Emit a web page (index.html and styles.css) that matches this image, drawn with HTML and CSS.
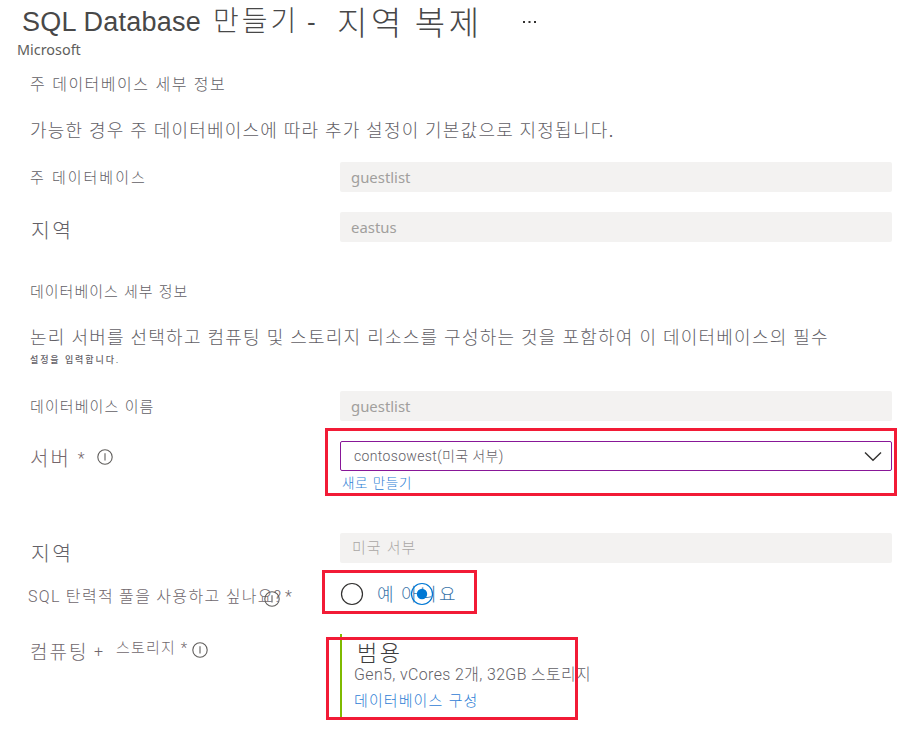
FILE: index.html
```
<!DOCTYPE html>
<html lang="ko">
<head>
<meta charset="utf-8">
<title>SQL Database</title>
<link rel="stylesheet" href="styles.css">
</head>
<body>
<svg width="0" height="0" class="defs"><defs>
  <symbol id="info" viewBox="0 0 16 16"><circle cx="8" cy="8" r="7.2" fill="none" stroke="#605e5c" stroke-width="1.1"/><path d="M8 4.300v7.200" stroke="#605e5c" stroke-width="1.1"/></symbol>
</defs></svg>
<main class="page">
  <header class="title">
    <h1 class="title-main"><span class="title-latin">SQL Database</span> 만들기</h1>
    <span class="title-dash">-</span>
    <span class="title-sub">지역 복제</span>
    <svg class="more" width="16" height="4" viewBox="0 0 16 4"><path d="M1 1h2v2H1zM6.500 1h2v2h-2zM12 1h2v2h-2z" fill="#323130"/></svg>
  </header>
  <p class="vendor">Microsoft</p>

  <h2 class="heading heading-primary">주 데이터베이스 세부 정보</h2>
  <p class="desc desc-primary">가능한 경우 주 데이터베이스에 따라 추가 설정이 기본값으로 지정됩니다.</p>
  <div class="row row-first">
    <label class="label label-primary">주 데이터베이스</label>
    <div class="field">guestlist</div>
  </div>
  <div class="row">
    <label class="label label-large">지역</label>
    <div class="field">eastus</div>
  </div>

  <h2 class="heading heading-details">데이터베이스 세부 정보</h2>
  <p class="desc desc-details">논리 서버를 선택하고 컴퓨팅 및 스토리지 리소스를 구성하는 것을 포함하여 이 데이터베이스의 필수</p>
  <p class="desc-small">설정을 입력합니다.</p>
  <div class="row row-name">
    <label class="label label-name">데이터베이스 이름</label>
    <div class="field">guestlist</div>
  </div>
  <div class="row row-server">
    <label class="label label-server">서버 <span class="star">*</span><svg class="info"><use href="#info"/></svg></label>
    <div class="control">
      <div class="select"><span>contosowest(미국 서부)</span>
        <svg width="18" height="11" viewBox="0 0 18 11"><path d="M1 1.500l8 7.800 8-7.800" fill="none" stroke="#323130" stroke-width="1.400"/></svg>
      </div>
      <a class="link link-new">새로 만들기</a>
      <i class="mark mark-server"></i>
    </div>
  </div>
  <div class="row row-region">
    <label class="label label-large">지역</label>
    <div class="field field-korean">미국 서부</div>
  </div>
  <div class="row row-pool">
    <label class="label label-pool">SQL 탄력적 풀을 사용하고 싶나요?<span class="pool-star">*</span><svg class="info info-over"><use href="#info"/></svg></label>
    <div class="control radios">
      <svg class="radio" viewBox="0 0 24 24"><circle cx="12" cy="12" r="10.500" fill="none" stroke="#323130" stroke-width="1.200"/></svg>
      <span class="yes">예</span><span class="no">아니요<svg class="radio radio-over" viewBox="0 0 24 24"><circle cx="12" cy="12" r="10.500" fill="none" stroke="#0078d4" stroke-width="1.200"/><circle cx="12" cy="12" r="5.200" fill="#0078d4"/></svg></span>
      <i class="mark mark-pool"></i>
    </div>
  </div>
  <div class="row row-compute">
    <label class="label label-compute"><span class="compute">컴퓨팅</span><span class="plus">+</span><span class="storage">스토리지 *</span><svg class="info info-storage"><use href="#info"/></svg></label>
    <div class="control tier">
      <strong class="tier-name">범용</strong>
      <span class="tier-spec">Gen5, vCores 2개, 32GB 스토리지</span>
      <a class="link link-config">데이터베이스 구성</a>
      <i class="mark mark-tier"></i>
    </div>
  </div>
</main>
</body>
</html>
```
FILE: styles.css
```
* { box-sizing: border-box; }
body { margin: 0; background: #fff; color: #626066; font-family: "Liberation Sans", "Noto Sans CJK KR", sans-serif; font-weight: 300; }
h1, h2, p { margin: 0; font-weight: 300; white-space: nowrap; }
svg { display: block; flex: none; }
.defs { position: absolute; }
.page { width: 906px; height: 731px; overflow: hidden; }

.title { display: flex; height: 42px; padding-left: 22px; color: #484848; line-height: 43px; white-space: nowrap; }
.title-main { width: 285px; font-size: 28px; letter-spacing: 3px; word-spacing: 1px; }
.title-latin { font-size: 27px; letter-spacing: .25px; word-spacing: 0; }
.title-dash { width: 30px; font-size: 26px; line-height: 45px; }
.title-sub { width: 185px; font-size: 33px; letter-spacing: 3.6px; word-spacing: -3px; line-height: 48px; }
.more { margin-top: 20px; }
.vendor { height: 18px; padding-left: 17px; color: #605e5c; font: 14.4px/16px "Noto Sans", sans-serif; }

.heading, .desc { padding-left: 30px; }
.heading-primary { margin-top: 17px; font-size: 16px; line-height: 16px; letter-spacing: 1.5px; }
.desc-primary { margin-top: 28px; font-size: 18px; line-height: 20px; letter-spacing: 1.2px; word-spacing: -.5px; }
.heading-details { margin-top: 41px; font-size: 15px; line-height: 18px; letter-spacing: 1px; }
.desc-details { margin-top: 28px; font-size: 18px; line-height: 18px; letter-spacing: 1.22px; word-spacing: -.4px; }
.desc-small { margin-top: 7px; padding-left: 30px; font-size: 9px; line-height: 12px; letter-spacing: 1.9px; font-weight: 500; }

.row { display: grid; grid-template-columns: 310px 552px; margin: 20px 0 0 30px; line-height: 32px; white-space: nowrap; }
.row-first { margin-top: 21px; }
.row-name { margin-top: 25px; }
.row-region { margin-top: 38px; }
.row-pool { margin-top: 16px; }
.row-compute { margin-top: 25px; }
.label { position: relative; height: 30px; }
.label-primary { font-size: 15px; letter-spacing: 2px; }
.label-large { padding-left: 1px; font-size: 20.500px; letter-spacing: 2.500px; line-height: 37px; }
.row-region .label-large { line-height: 41px; }
.label-name { font-size: 15px; letter-spacing: 1.1px; }
.label-server { display: flex; color: #75666b; font-size: 20px; letter-spacing: 2px; line-height: 36px; }
.star { width: 20px; padding-left: 7px; font: 300 16px/36px Roboto, sans-serif; }
.info { width: 16px; height: 16px; }
.label-server .info { margin: 8px 0 0 6px; }
.label-pool { left: -2px; color: #70676d; font: 300 16px/36px Roboto, "Noto Sans CJK KR", sans-serif; letter-spacing: 1.3px; }
.pool-star { position: absolute; left: 257px; top: 0; }
.info-over { position: absolute; left: 236px; top: 12px; }
.label-compute { display: flex; color: #70676d; }
.compute { width: 64px; font-size: 19px; letter-spacing: 2px; line-height: 37px; }
.plus { width: 22px; font: 300 16px/36px Roboto, sans-serif; }
.storage { width: 76px; font: 300 15px/29px Roboto, "Noto Sans CJK KR", sans-serif; letter-spacing: 1.2px; }
.info-storage { margin-top: 8px; }

.field { height: 30px; padding-left: 11px; border-radius: 2px; background: #f3f2f1; color: #a19f9d; font: 14.900px/31px "Noto Sans", sans-serif; }
.field-korean { padding-left: 12px; color: #aaa7a5; font: 300 15px/29px "Liberation Sans", "Noto Sans CJK KR", sans-serif; letter-spacing: 1px; }
.control { position: relative; }
.row-server .control { height: 54px; }
.select { display: flex; align-items: center; justify-content: space-between; height: 30px; padding: 0 9px 0 13px; border: 1px solid #881798; border-radius: 2px; font: 300 14px/30px Roboto, "Noto Sans CJK KR", sans-serif; letter-spacing: .35px; }
.link { display: block; color: #2f80d5; }
.link-new { padding-left: 2px; font-size: 13.500px; line-height: 25px; letter-spacing: .7px; }
.link-config { font-size: 15px; line-height: 30px; letter-spacing: 1.1px; }
.mark { position: absolute; border: 3px solid #f21b36; }
.mark-server { left: -15px; top: -13px; width: 572px; height: 68px; }
.mark-pool { left: -18px; top: -9px; width: 155px; height: 44px; }
.mark-tier { left: -14px; top: 3px; width: 252px; height: 83px; }
.radios { display: flex; height: 30px; color: #3c76aa; font-size: 18px; }
.radio { width: 24px; height: 24px; margin-top: 3px; }
.yes { width: 24px; margin-left: 13px; }
.no { position: relative; letter-spacing: 2.500px; }
.radio-over { position: absolute; left: 9px; top: 0; }
.tier { display: flex; flex-direction: column; height: 83px; padding-left: 14px; }
.tier::before { content: ""; position: absolute; left: 0; top: 0; width: 2px; height: 83px; background: #7fba00; }
.tier-name { height: 22px; margin-top: 8px; padding-left: 3px; color: #3d3d3d; font-size: 22px; font-weight: 300; line-height: 24px; letter-spacing: 2.500px; }
.tier-spec { font: 300 15.900px/22px Roboto, "Noto Sans CJK KR", sans-serif; letter-spacing: .4px; }
```
